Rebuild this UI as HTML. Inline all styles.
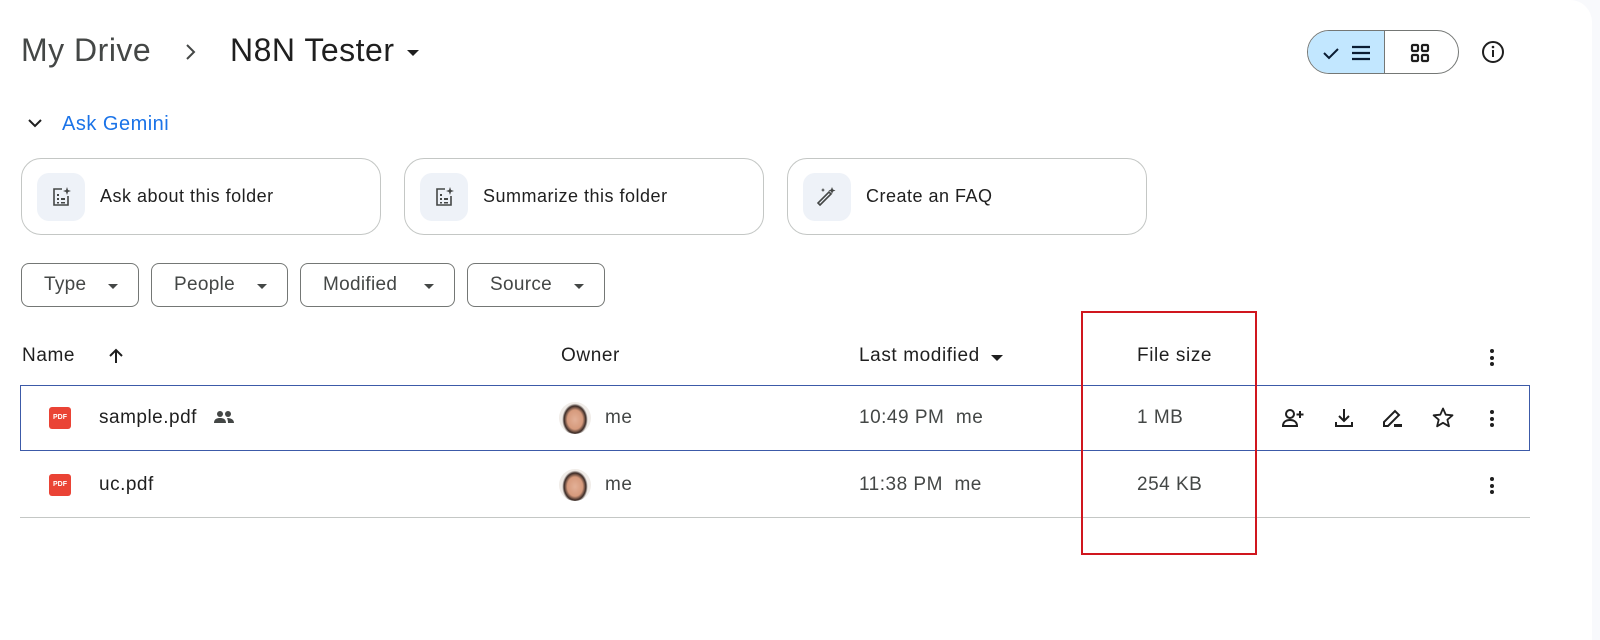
<!DOCTYPE html>
<html><head><meta charset="utf-8"><style>
*{margin:0;padding:0;box-sizing:border-box}
body{width:1600px;height:631px;background:#f8f9fc;font-family:"Liberation Sans",Arial,sans-serif;color:#1f1f1f;position:relative;overflow:hidden}
.card{position:absolute;left:0;top:0;width:1592px;height:640px;background:#fff;border-top-right-radius:22px}
.a{position:absolute}
.t{position:absolute;white-space:nowrap}
.gc{position:absolute;top:158px;height:77px;width:360px;border:1px solid #c4c7c5;border-radius:20px}
.gc .ic{position:absolute;left:15px;top:14px;width:48px;height:48px;background:#eef2f8;border-radius:12px}
.gc .ic svg{position:absolute;left:14px;top:14px}
.gc span{position:absolute;left:78px;top:27px;font-size:18px;letter-spacing:0.5px}
.chip{position:absolute;top:263px;height:44px;border:1px solid #747775;border-radius:8px;font-size:19px;color:#444746;letter-spacing:0.3px}
.chip span{position:absolute;left:22px;top:10px}
.chip i{position:absolute;right:20px;top:20px;border-left:5px solid transparent;border-right:5px solid transparent;border-top:5px solid #444746}
.hd{font-size:19px;top:345px;color:#1f1f1f;letter-spacing:0.6px}
.rt{font-size:19px;color:#444746;letter-spacing:0.5px}
.pdf{position:absolute;left:49px;width:22px;height:22px;background:#ea4335;border-radius:3px;color:#fff;font-size:7px;font-weight:bold;text-align:center;line-height:22px}
.av{position:absolute;left:559px;width:32px;height:32px;border-radius:50%;background:radial-gradient(ellipse 40% 50% at 50% 55%,#e3b097 0,#d69a7c 60%,#3a2a25 85%,#f0ece8 100%)}
.dots{position:absolute;width:4px}
.dots b{display:block;width:4px;height:4px;border-radius:50%;background:#1f1f1f;margin-bottom:2.5px}
</style></head><body>
<div class="card"></div>
<div class="t" style="left:21px;top:32px;font-size:32px;color:#444746;letter-spacing:0.5px">My Drive</div>
<svg class="a" style="left:184px;top:42px" width="14" height="20"><path d="M3 3l7 7-7 7" fill="none" stroke="#444746" stroke-width="2"/></svg>
<div class="t" style="left:230px;top:32px;font-size:32px;color:#1f1f1f;letter-spacing:0.5px">N8N Tester</div>
<div class="a" style="left:407px;top:50px;border-left:6px solid transparent;border-right:6px solid transparent;border-top:6px solid #1f1f1f"></div>
<div class="a" style="left:1307px;top:30px;width:152px;height:44px;border:1px solid #747775;border-radius:22px;overflow:hidden">
 <div class="a" style="left:0;top:0;width:77px;height:44px;background:#c2e7ff;border-right:1px solid #747775"></div>
 <svg class="a" style="left:14px;top:12px" width="50" height="20"><path d="M2 10l5 5 9-9" fill="none" stroke="#0b1d33" stroke-width="2"/><path d="M30 4h18M30 10h18M30 16h18" stroke="#0b1d33" stroke-width="2.2"/></svg>
 <svg class="a" style="left:102px;top:12px" width="20" height="20"><g fill="none" stroke="#1f1f1f" stroke-width="2.2"><rect x="2" y="2" width="6" height="6" rx="1"/><rect x="12" y="2" width="6" height="6" rx="1"/><rect x="2" y="12" width="6" height="6" rx="1"/><rect x="12" y="12" width="6" height="6" rx="1"/></g></svg>
</div>
<svg class="a" style="left:1481px;top:40px" width="24" height="24"><circle cx="12" cy="12" r="10" fill="none" stroke="#1f1f1f" stroke-width="2"/><path d="M12 10v7" stroke="#1f1f1f" stroke-width="2"/><circle cx="12" cy="7" r="1.3" fill="#1f1f1f"/></svg>
<svg class="a" style="left:27px;top:117px" width="16" height="12"><path d="M2 3l6 6 6-6" fill="none" stroke="#1f1f1f" stroke-width="2"/></svg>
<div class="t" style="left:62px;top:113px;font-size:20px;color:#1a73e8;letter-spacing:0.5px">Ask Gemini</div>
<div class="gc" style="left:21px"><div class="ic"><svg width="20" height="20"><g fill="none" stroke="#444746" stroke-width="1.6"><path d="M11 2H3v16h14V9"/></g><g fill="#444746"><rect x="6" y="7" width="2" height="2"/><rect x="6" y="11" width="2" height="2"/><rect x="10" y="11" width="4" height="2"/><rect x="6" y="15" width="2" height="1.5"/><rect x="10" y="15" width="4" height="1.5"/><path d="M16 0l1 3 3 1-3 1-1 3-1-3-3-1 3-1z"/></g></svg></div><span>Ask about this folder</span></div>
<div class="gc" style="left:404px"><div class="ic"><svg width="20" height="20"><g fill="none" stroke="#444746" stroke-width="1.6"><path d="M11 2H3v16h14V9"/></g><g fill="#444746"><rect x="6" y="7" width="2" height="2"/><rect x="6" y="11" width="2" height="2"/><rect x="10" y="11" width="4" height="2"/><rect x="6" y="15" width="2" height="1.5"/><rect x="10" y="15" width="4" height="1.5"/><path d="M16 0l1 3 3 1-3 1-1 3-1-3-3-1 3-1z"/></g></svg></div><span>Summarize this folder</span></div>
<div class="gc" style="left:787px"><div class="ic"><svg width="20" height="20"><path d="M3 18L14 7l-2-2L1 16l2 2z" fill="none" stroke="#444746" stroke-width="1.6"/><path d="M15 0l1 2.5 2.5 1-2.5 1-1 2.5-1-2.5-2.5-1 2.5-1zM6 1l.7 1.5L8 3l-1.3.6L6 5l-.7-1.4L4 3l1.3-.5z" fill="#444746"/></svg></div><span>Create an FAQ</span></div>
<div class="chip" style="left:21px;width:118px"><span>Type</span><i></i></div>
<div class="chip" style="left:151px;width:137px"><span>People</span><i></i></div>
<div class="chip" style="left:300px;width:155px"><span>Modified</span><i></i></div>
<div class="chip" style="left:467px;width:138px"><span>Source</span><i></i></div>
<div class="t hd" style="left:22px">Name</div>
<svg class="a" style="left:107px;top:347px" width="18" height="18"><path d="M9 16V3M3 9l6-6 6 6" fill="none" stroke="#1f1f1f" stroke-width="2"/></svg>
<div class="t hd" style="left:561px">Owner</div>
<div class="t hd" style="left:859px">Last modified</div>
<div class="a" style="left:991px;top:355px;border-left:6px solid transparent;border-right:6px solid transparent;border-top:6px solid #1f1f1f"></div>
<div class="t hd" style="left:1137px">File size</div>
<div class="dots" style="left:1490px;top:349px"><b></b><b></b><b></b></div>
<div class="a" style="left:20px;top:385px;width:1510px;height:66px;border:1.5px solid #3c5aa8"></div>
<div class="pdf" style="top:407px">PDF</div>
<div class="t" style="left:99px;top:407px;font-size:19px;letter-spacing:0.5px">sample.pdf</div>
<svg class="a" style="left:213px;top:410px" width="22" height="14"><g fill="#444746"><circle cx="7" cy="4" r="3"/><circle cx="15" cy="4" r="3"/><path d="M1 13c0-4 3-5 6-5s6 1 6 5zM14 8c3 0 7 1 7 5h-6c0-2-.5-4-1-5z"/></g></svg>
<div class="av" style="top:402px"></div>
<div class="t rt" style="left:605px;top:407px">me</div>
<div class="t rt" style="left:859px;top:407px">10:49 PM&nbsp; me</div>
<div class="t rt" style="left:1137px;top:407px">1 MB</div>
<svg class="a" style="left:1281px;top:407px" width="24" height="22"><g fill="none" stroke="#1f1f1f" stroke-width="2"><circle cx="9" cy="7" r="4"/><path d="M2 19c0-4 3-6 7-6s7 2 7 6z"/><path d="M19 4v7M15.5 7.5h7"/></g></svg>
<svg class="a" style="left:1333px;top:407px" width="22" height="22"><g fill="none" stroke="#1f1f1f" stroke-width="2"><path d="M11 2v12M6 9l5 5 5-5M3 15v4h16v-4"/></g></svg>
<svg class="a" style="left:1381px;top:407px" width="24" height="22"><g fill="none" stroke="#1f1f1f" stroke-width="2"><path d="M3 19v-4L14 4l4 4L7 19z"/></g><rect x="13" y="17" width="8" height="3" fill="#1f1f1f"/></svg>
<svg class="a" style="left:1431px;top:406px" width="24" height="24"><path d="M12 2.5l2.8 6.2 6.7.6-5.1 4.4 1.6 6.6L12 16.8l-5.9 3.5 1.6-6.6-5.1-4.4 6.7-.6z" fill="none" stroke="#1f1f1f" stroke-width="1.8" stroke-linejoin="round"/></svg>
<div class="dots" style="left:1490px;top:410px"><b></b><b></b><b></b></div>
<div class="pdf" style="top:474px">PDF</div>
<div class="t" style="left:99px;top:474px;font-size:19px;letter-spacing:0.5px">uc.pdf</div>
<div class="av" style="top:469px"></div>
<div class="t rt" style="left:605px;top:474px">me</div>
<div class="t rt" style="left:859px;top:474px">11:38 PM&nbsp; me</div>
<div class="t rt" style="left:1137px;top:474px">254 KB</div>
<div class="dots" style="left:1490px;top:477px"><b></b><b></b><b></b></div>
<div class="a" style="left:20px;top:517px;width:1510px;height:1px;background:#c4c7c5"></div>
<div class="a" style="left:1081px;top:311px;width:176px;height:244px;border:2.5px solid #d0161e"></div>
</body></html>
